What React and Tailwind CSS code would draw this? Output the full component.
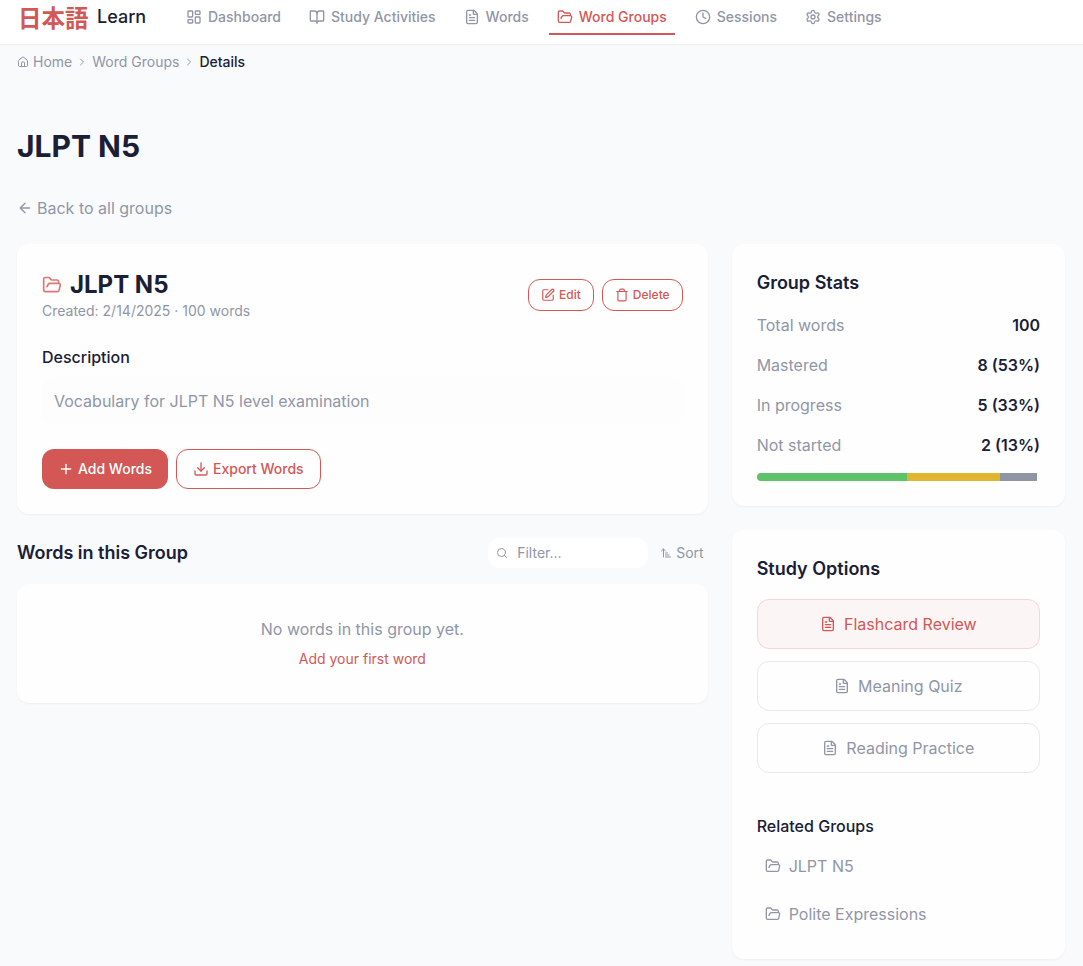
import React from "react";
import {
  LayoutDashboard, BookOpen, FileText, FolderOpen, Clock, Settings, House, ChevronRight,
  ArrowLeft, SquarePen, Trash, Plus, Download, Search, ArrowUpNarrowWide,
} from "lucide-react";

const nav = [
  { label: "Dashboard", icon: LayoutDashboard },
  { label: "Study Activities", icon: BookOpen },
  { label: "Words", icon: FileText },
  { label: "Word Groups", icon: FolderOpen, active: true },
  { label: "Sessions", icon: Clock },
  { label: "Settings", icon: Settings },
];

const stats = [
  ["Total words", "100"],
  ["Mastered", "8 (53%)"],
  ["In progress", "5 (33%)"],
  ["Not started", "2 (13%)"],
];

const options = [
  { label: "Flashcard Review", active: true },
  { label: "Meaning Quiz" },
  { label: "Reading Practice" },
];

function Card({ className, children }) {
  return (
    <section className={"rounded-xl bg-[#fefefe] shadow-[0_1px_2px_rgba(0,0,0,0.05)] " + className}>
      {children}
    </section>
  );
}

function Header() {
  return (
    <header className="flex h-[45px] items-start border-b border-[#eff1f4] bg-white pl-[18px] shadow-[0_1px_2px_rgba(0,0,0,0.02)]">
      <div className="flex h-[35px] w-[160px] items-center gap-2">
        <span className="w-[71px] pb-px text-[23.5px] leading-[34px] font-bold whitespace-nowrap text-[#d35855] font-['Noto_Sans_CJK_JP',sans-serif]">日本語</span>
        <span className="pb-px text-lg font-medium">Learn</span>
      </div>
      <nav className="flex gap-3">
        {nav.map(({ label, icon: Icon, active }) => (
          <a
            key={label}
            className={
              "flex h-[35px] items-center gap-1.5 border-b-2 px-2 text-sm font-medium whitespace-nowrap " +
              (active ? "border-[#d35855] text-[#d35855]" : "border-transparent text-[#9096a6]")
            }
          >
            <Icon size={16} />
            {label}
          </a>
        ))}
      </nav>
    </header>
  );
}

export default function App() {
  return (
    <div className="h-[966px] overflow-hidden bg-[#f9fafc] text-[#192036] font-['Inter',sans-serif]">
      <Header />
      <main className="pr-[18px] pl-[17px]">
        <div className="flex h-[34px] items-center text-sm text-[#9096a6]">
          <House size={12} className="mr-1" />
          Home
          <ChevronRight size={12} className="mx-1" />
          Word Groups
          <ChevronRight size={12} className="mx-1" />
          <span className="font-medium text-[#192036]">Details</span>
        </div>
        <h1 className="mt-[49px] text-3xl leading-9 font-bold">JLPT N5</h1>
        <a className="mt-8 flex h-6 items-center gap-1 text-base text-[#9096a6]">
          <ArrowLeft size={16} />
          Back to all groups
        </a>
        <div className="mt-6 grid grid-cols-3 items-start gap-6">
          <div className="col-span-2">
            <Card className="h-[270px] p-[25px]">
              <div className="flex items-start justify-between">
                <div>
                  <h2 className="flex h-8 items-center gap-2 text-2xl font-bold">
                    <FolderOpen size={20} className="text-[#d35855] opacity-80" />
                    JLPT N5
                  </h2>
                  <p className="text-sm text-[#9096a6]">Created: 2/14/2025 · 100 words</p>
                </div>
                <div className="mt-2.5 flex gap-2 text-xs font-medium text-[#d35855]">
                  <button className="flex h-8 items-center gap-1 rounded-xl border border-[#d35855] px-3">
                    <SquarePen size={14} />
                    Edit
                  </button>
                  <button className="flex h-8 items-center gap-1 rounded-xl border border-[#d35855] px-3">
                    <Trash size={14} />
                    Delete
                  </button>
                </div>
              </div>
              <h3 className="mt-6 text-base font-medium">Description</h3>
              <p className="mt-2 rounded-xl bg-[#fdfdfe] p-3 text-base text-[#9096a6]">
                Vocabulary for JLPT N5 level examination
              </p>
              <div className="mt-6 flex gap-2 text-sm font-medium">
                <button className="flex h-10 items-center gap-1 rounded-xl bg-[#d35855] px-4 text-white">
                  <Plus size={16} />
                  Add Words
                </button>
                <button className="flex h-10 items-center gap-1 rounded-xl border border-[#d35855] px-4 text-[#d35855]">
                  <Download size={16} />
                  Export Words
                </button>
              </div>
            </Card>
            <div className="mt-6 flex h-[30px] items-center justify-between">
              <h2 className="text-lg font-semibold">Words in this Group</h2>
              <div className="flex items-center gap-3 pr-1 text-sm text-[#9096a6]">
                <div className="flex h-[30px] w-40 items-center gap-[9px] rounded-xl bg-white px-2">
                  <Search size={12} />
                  Filter...
                </div>
                <div className="flex items-center gap-1">
                  <ArrowUpNarrowWide size={12} />
                  Sort
                </div>
              </div>
            </div>
            <Card className="mt-4 flex h-[119px] flex-col items-center pt-[33px]">
              <p className="text-base text-[#9096a6]">No words in this group yet.</p>
              <a className="mt-2 text-sm text-[#d35855]">Add your first word</a>
            </Card>
          </div>
          <div className="flex flex-col gap-6">
            <Card className="h-[262px] p-[25px]">
              <h2 className="text-lg font-semibold">Group Stats</h2>
              <dl className="mt-4 flex flex-col gap-4">
                {stats.map(([label, value]) => (
                  <div key={label} className="flex justify-between">
                    <dt className="text-[#9096a6]">{label}</dt>
                    <dd className="font-semibold">{value}</dd>
                  </div>
                ))}
              </dl>
              <div className="mt-4 flex h-2 overflow-hidden rounded-full">
                <div className="w-[53%] bg-[#5ec269]" />
                <div className="w-[33%] bg-[#e2b52f]" />
                <div className="w-[13%] bg-[#8f95a3]" />
              </div>
            </Card>
            <Card className="h-[429px] p-[25px]">
              <h2 className="text-lg font-semibold">Study Options</h2>
              <div className="mt-4 flex flex-col gap-3">
                {options.map(({ label, active }) => (
                  <button
                    key={label}
                    className={
                      "flex h-[50px] items-center justify-center gap-2 rounded-xl border text-base " +
                      (active
                        ? "border-[#f5d5d5] bg-[#fcf5f5] text-[#d35855]"
                        : "border-[#e8e9eb] text-[#9096a6]")
                    }
                  >
                    <FileText size={16} />
                    {label}
                  </button>
                ))}
              </div>
              <h3 className="mt-[41px] text-base font-medium">Related Groups</h3>
              <div className="mt-2 flex flex-col gap-2 text-base text-[#9096a6]">
                {["JLPT N5", "Polite Expressions"].map((g) => (
                  <a key={g} className="flex items-center gap-2 p-2">
                    <FolderOpen size={16} />
                    {g}
                  </a>
                ))}
              </div>
            </Card>
          </div>
        </div>
      </main>
    </div>
  );
}
